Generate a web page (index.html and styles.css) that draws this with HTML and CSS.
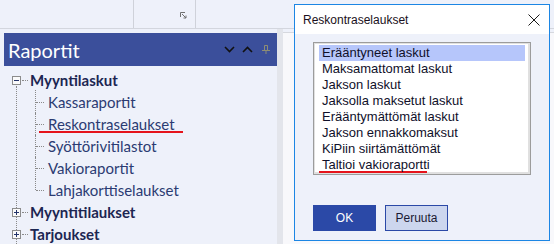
FILE: index.html
```html
<!DOCTYPE html>
<html lang="fi">
<head>
    <meta charset="UTF-8">
    <title>Raportit</title>
    <link rel="stylesheet" href="styles.css">
</head>
<body>
    <div class="toolbar">
        <div class="group first"></div>
        <div class="group second">
            <svg class="launcher" width="7" height="7" viewBox="0 0 7 7">
                <path d="M0.5 5V0.5H5" fill="none" stroke="#707070"/>
                <path d="M2 2L6 6M6 3.5V6H3.5" fill="none" stroke="#707070"/>
            </svg>
        </div>
    </div>

    <div class="main">
        <div class="panel">
            <div class="panel-header">
                <span class="panel-title">Raportit</span>
                <div class="header-icons">
                    <svg width="11" height="7" viewBox="0 0 11 7"><path d="M1 1L5.5 5.5L10 1" fill="none" stroke="#111" stroke-width="1.6"/></svg>
                    <svg width="11" height="7" viewBox="0 0 11 7"><path d="M1 6L5.5 1.5L10 6" fill="none" stroke="#111" stroke-width="1.6"/></svg>
                    <svg class="pin" width="8" height="9" viewBox="0 0 8 9"><path d="M2.5 0.5H5.5V5.5M2.5 0.5V5.5M0 5.5H8M4 5.5V9" fill="none" stroke="#8e8e74"/></svg>
                </div>
            </div>

            <div class="tree">
                <div class="node">
                    <div class="row">
                        <svg class="box" width="9" height="9" viewBox="0 0 9 9"><rect x="0.5" y="0.5" width="8" height="8" fill="#fafafa" stroke="#8c8c8c"/><path d="M2 4.5H7" stroke="#23336a"/></svg>
                        <span class="dots"></span>
                        <span class="label">Myyntilaskut</span>
                    </div>
                    <ul class="children">
                        <li>Kassaraportit</li>
                        <li class="marked">Reskontraselaukset</li>
                        <li>Syöttörivitilastot</li>
                        <li>Vakioraportit</li>
                        <li>Lahjakorttiselaukset</li>
                    </ul>
                </div>
                <div class="node">
                    <div class="row">
                        <svg class="box" width="9" height="9" viewBox="0 0 9 9"><rect x="0.5" y="0.5" width="8" height="8" fill="#fafafa" stroke="#8c8c8c"/><path d="M2 4.5H7M4.5 2V7" stroke="#23336a"/></svg>
                        <span class="dots"></span>
                        <span class="label">Myyntitilaukset</span>
                    </div>
                </div>
                <div class="node">
                    <div class="row">
                        <svg class="box" width="9" height="9" viewBox="0 0 9 9"><rect x="0.5" y="0.5" width="8" height="8" fill="#fafafa" stroke="#8c8c8c"/><path d="M2 4.5H7M4.5 2V7" stroke="#23336a"/></svg>
                        <span class="dots"></span>
                        <span class="label">Tarjoukset</span>
                    </div>
                </div>
            </div>
        </div>
        <div class="splitter"></div>
        <div class="workspace"></div>
    </div>

    <div class="dialog">
        <div class="dialog-title">
            <span>Reskontraselaukset</span>
            <svg width="12" height="12" viewBox="0 0 12 12"><path d="M0.5 0.5L11.5 11.5M11.5 0.5L0.5 11.5" stroke="#1a1a1a"/></svg>
        </div>
        <div class="dialog-body">
            <ul class="listbox">
                <li class="selected">Erääntyneet laskut</li>
                <li>Maksamattomat laskut</li>
                <li>Jakson laskut</li>
                <li>Jaksolla maksetut laskut</li>
                <li>Erääntymättömät laskut</li>
                <li>Jakson ennakkomaksut</li>
                <li>KiPiin siirtämättömät</li>
                <li class="marked">Taltioi vakioraportti</li>
            </ul>
            <div class="dialog-buttons">
                <button class="btn primary">OK</button>
                <button class="btn">Peruuta</button>
            </div>
        </div>
    </div>
</body>
</html>
```

FILE: styles.css
```css
body {
    margin: 0;
    width: 554px;
    height: 244px;
    overflow: hidden;
    background-color: #eef1fa;
    font-family: "Lato", "Liberation Sans", sans-serif;
}

.toolbar {
    display: flex;
    height: 28px;
    border-bottom: 1px solid #d3d6de;
}
.toolbar .group {
    border-right: 1px solid #cfd2da;
}
.toolbar .first {
    width: 133px;
}
.toolbar .second {
    width: 61px;
    display: flex;
    align-items: flex-end;
    justify-content: flex-end;
}
.launcher {
    margin: 0 8px 9px 0;
}

.main {
    display: flex;
    height: 215px;
    overflow: hidden;
}
.panel {
    width: 277px;
    padding-top: 4px;
    display: flex;
    flex-direction: column;
}
.panel-header {
    margin-left: 4px;
    height: 33px;
    background-color: #3b4f9b;
    display: flex;
    align-items: center;
    padding-left: 4px;
}
.panel-title {
    color: white;
    font-size: 20px;
    flex: 1;
}
.header-icons {
    display: flex;
    align-items: center;
    gap: 7px;
    padding-right: 7px;
}
.header-icons .pin {
    margin-left: 2px;
}

.tree {
    position: relative;
    flex: 1;
    padding-top: 3px;
    overflow: hidden;
}
.tree::before {
    content: "";
    position: absolute;
    left: 16px;
    top: 20px;
    bottom: 0;
    border-left: 1px dotted #8a8a8a;
}
.row {
    display: flex;
    align-items: center;
    height: 22px;
    padding-left: 12px;
    position: relative;
}
.box {
    display: block;
}
.dots {
    width: 6px;
    margin: 0 2px 0 1px;
    border-top: 1px dotted #8a8a8a;
}
.label {
    font-weight: bold;
    font-size: 15px;
    color: #1c2652;
}
.children {
    list-style: none;
    margin: 0 0 0 35px;
    padding: 0;
}
.children li {
    position: relative;
    height: 22px;
    line-height: 22px;
    padding-left: 13px;
    font-size: 15px;
    color: #2b3b72;
}
.children li::before {
    content: "";
    position: absolute;
    left: 1px;
    top: 11px;
    width: 8px;
    border-top: 1px dotted #8a8a8a;
}
.children li::after {
    content: "";
    position: absolute;
    left: 0;
    top: 0;
    height: 22px;
    border-left: 1px dotted #8a8a8a;
}
.children li:first-child::after {
    top: -1px;
    height: 23px;
}
.children li:last-child::after {
    height: 11px;
}
.children li.marked {
    background: linear-gradient(#e5141c, #e5141c) 4px 18px / 144px 2px no-repeat;
}

.splitter {
    width: 6px;
    background-color: #e3e5eb;
}
.workspace {
    flex: 1;
    margin-top: 3px;
    border-top: 1px solid #d6d8de;
    background-color: #f8f8fb;
}

.dialog {
    position: absolute;
    left: 294px;
    top: 4px;
    width: 256px;
    height: 237px;
    box-sizing: border-box;
    border: 1px solid #1c86e4;
    background-color: #eef1fa;
}
.dialog-title {
    height: 29px;
    background-color: white;
    display: flex;
    align-items: center;
    justify-content: space-between;
    padding: 0 9px 0 8px;
    font-family: "Liberation Sans", sans-serif;
    font-size: 12px;
    color: #1a1020;
}
.dialog-body {
    padding: 8px 0 0 18px;
}
.listbox {
    list-style: none;
    margin: 0;
    width: 218px;
    height: 133px;
    box-sizing: border-box;
    padding: 2px 5px 0 5px;
    border: 1px solid #9c9c9c;
    box-shadow: inset -2px -2px 0 #e0e0e0, inset 1px 1px 0 #e0e0e0;
    background-color: white;
    overflow: hidden;
    font-family: "Liberation Sans", sans-serif;
    font-size: 13px;
    color: #10102a;
}
.listbox li {
    height: 16px;
    line-height: 16px;
    padding-left: 3px;
}
.listbox li.selected {
    background-color: #b6c6fb;
}
.listbox li.marked {
    background: linear-gradient(#e5141c, #e5141c) 0 14px / 108px 2px no-repeat;
}
.dialog-buttons {
    display: flex;
    gap: 9px;
    margin-top: 30px;
}
.btn {
    width: 63px;
    height: 26px;
    border: 1px solid #2b49a7;
    background-color: #ccd6ee;
    color: #1a1a33;
    font-family: "Liberation Sans", sans-serif;
    font-size: 12px;
    padding: 0;
}
.btn.primary {
    background-color: #2b49a7;
    color: white;
}
```
